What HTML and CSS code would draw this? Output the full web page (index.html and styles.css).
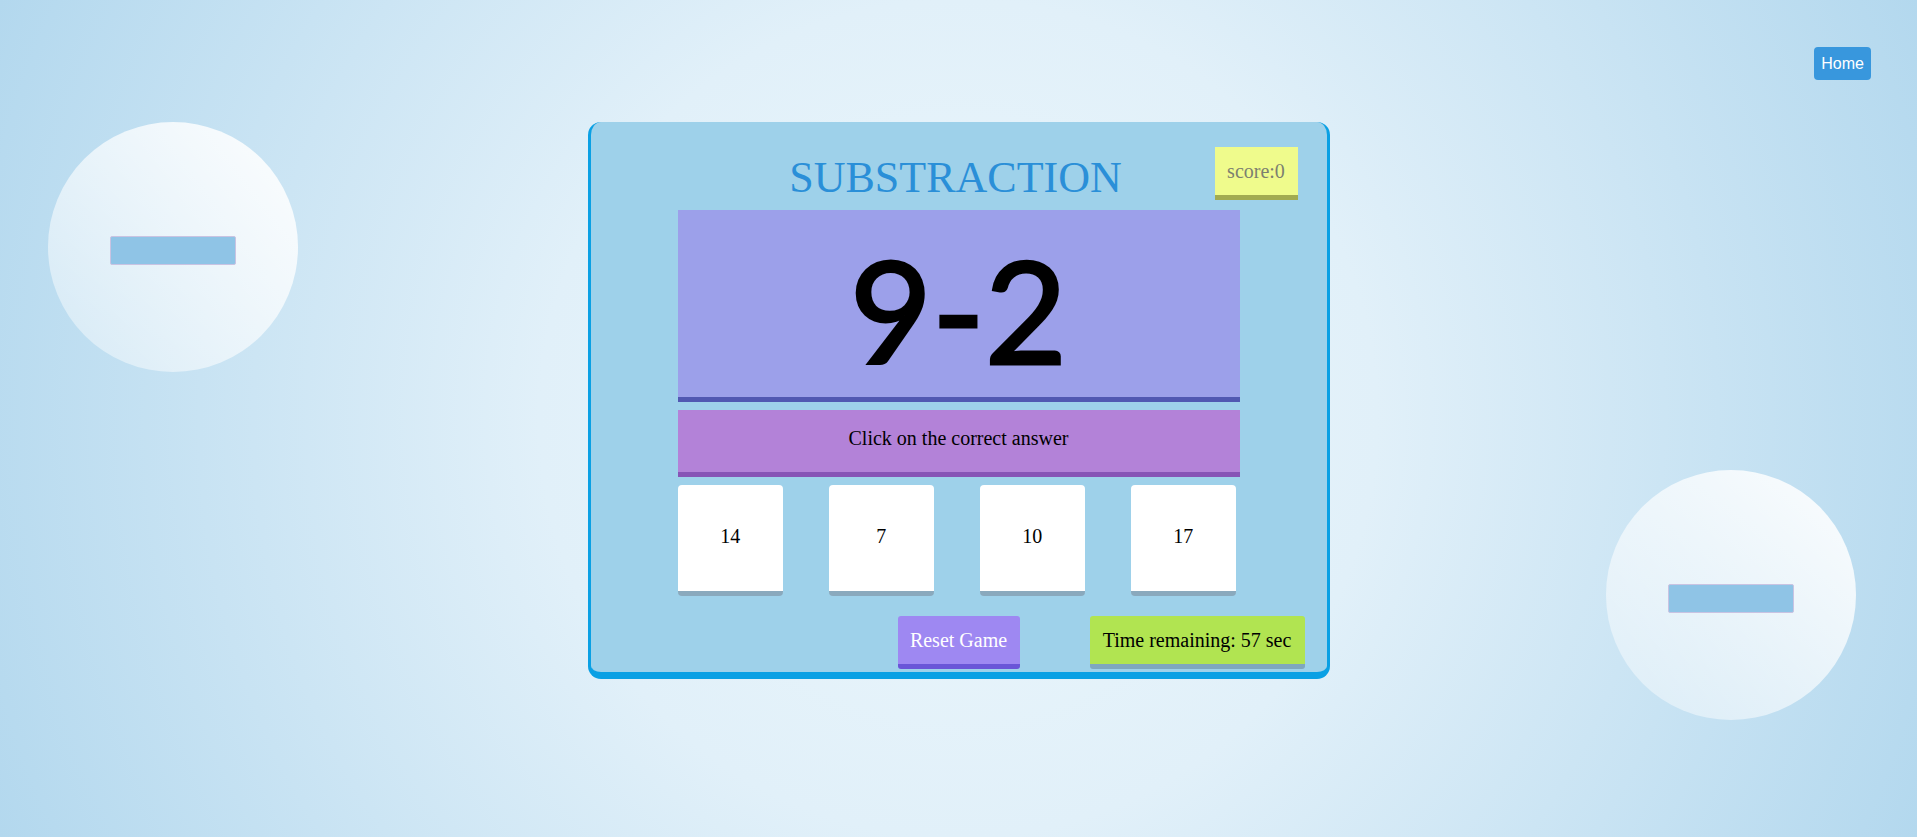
FILE: index.html
```
<!DOCTYPE html>
<html lang="en">
<head>
<meta charset="utf-8">
<title>Substraction</title>
<link rel="stylesheet" href="styles.css">
</head>
<body>
<div class="bubble bubble-left"><span class="minus"></span></div>
<div class="bubble bubble-right"><span class="minus"></span></div>

<header class="topbar">
  <button class="home-btn">Home</button>
</header>

<main class="stage">
  <section class="game">
    <h1 class="title">SUBSTRACTION</h1>
    <div class="score">score:0</div>
    <div class="question">9-2</div>
    <div class="instruction">Click on the correct answer</div>
    <div class="answers">
      <div class="answer">14</div>
      <div class="answer">7</div>
      <div class="answer">10</div>
      <div class="answer">17</div>
    </div>
    <div class="controls">
      <button class="reset-btn">Reset Game</button>
      <div class="timer">Time remaining: 57 sec</div>
    </div>
  </section>
</main>
</body>
</html>
```
FILE: styles.css
```
* {
  box-sizing: border-box;
}

html, body {
  margin: 0;
  padding: 0;
  height: 100%;
}

body {
  min-height: 837px;
  overflow: hidden;
  position: relative;
  font-family: "Liberation Serif", "Times New Roman", serif;
  background: radial-gradient(circle at 50% 50%, #ecf7fc 0%, #e1f0f9 40%, #b3d8ee 100%);
}

.bubble {
  position: absolute;
  width: 250px;
  height: 250px;
  border-radius: 50%;
  background: linear-gradient(to top right, rgba(255, 255, 255, 0.35), rgba(255, 255, 255, 0.95));
  display: flex;
  align-items: center;
  justify-content: center;
  padding-top: 7px;
}

.bubble-left {
  left: 48px;
  top: 122px;
}

.bubble-right {
  left: 1606px;
  top: 470px;
}

.minus {
  display: block;
  width: 126px;
  height: 29px;
  background: #8fc4e6;
  border: 1px solid #c9c3e2;
  border-radius: 2px;
}

.topbar {
  display: flex;
  justify-content: flex-end;
  padding: 47px 46px 0 0;
}

.home-btn {
  font-family: "Liberation Sans", Arial, sans-serif;
  font-size: 16px;
  color: #ffffff;
  background: #3897dd;
  border: none;
  border-radius: 4px;
  padding: 0 7px;
  height: 33px;
  line-height: 33px;
}

.stage {
  display: flex;
  justify-content: center;
  padding-top: 42px;
}

.game {
  position: relative;
  width: 742px;
  background: #9ed1ea;
  border-style: solid;
  border-color: #0aa0e4;
  border-width: 0 3px 7px 3px;
  border-radius: 13px;
  padding: 32px 0 3px;
}

.title {
  margin: 0 0 8px;
  text-align: center;
  font-weight: normal;
  font-size: 44px;
  line-height: 48px;
  color: #2a8fd8;
  padding-right: 6px;
}

.score {
  position: absolute;
  top: 25px;
  right: 29px;
  width: 83px;
  height: 53px;
  background: #effb8c;
  border-bottom: 5px solid #a2ab50;
  color: #7c8070;
  font-size: 20px;
  display: flex;
  align-items: center;
  justify-content: center;
}

.question {
  width: 562px;
  height: 192px;
  margin: 0 auto;
  background: #9ca0ea;
  border-bottom: 5px solid #5158b2;
  text-align: center;
  font-family: "Comic Sans MS", "Lato", sans-serif;
  font-size: 142px;
  -webkit-text-stroke: 3px #000000;
  line-height: 175px;
  padding-top: 12px;
  color: #000000;
}

.instruction {
  width: 562px;
  height: 67px;
  margin: 8px auto 0;
  background: #b382d8;
  border-bottom: 5px solid #8754b6;
  text-align: center;
  font-size: 20px;
  line-height: 57px;
  padding-bottom: 5px;
  color: #000000;
}

.answers {
  width: 562px;
  margin: 8px auto 0;
  display: flex;
  gap: 45.5px;
}

.answer {
  width: 105.5px;
  height: 111px;
  background: #ffffff;
  border-radius: 4px;
  border-bottom: 5px solid #8aa9bd;
  text-align: center;
  font-size: 20px;
  line-height: 102px;
  padding-bottom: 4px;
  color: #000000;
}

.controls {
  margin-top: 20px;
  display: grid;
  grid-template-columns: 1fr auto 1fr;
  align-items: start;
}

.reset-btn {
  grid-column: 2;
  font-family: "Liberation Serif", "Times New Roman", serif;
  font-size: 20px;
  color: #ffffff;
  background: #9e88f2;
  border: none;
  border-bottom: 5px solid #6a55d8;
  border-radius: 3px;
  width: 122px;
  height: 53px;
  padding: 0;
  line-height: 48px;
}

.timer {
  grid-column: 3;
  justify-self: end;
  margin-right: 22px;
  width: 215px;
  height: 53px;
  background: #b1e451;
  border-bottom: 5px solid #7fa7bf;
  border-radius: 3px;
  font-size: 20px;
  line-height: 48px;
  text-align: center;
  color: #000000;
}
```
